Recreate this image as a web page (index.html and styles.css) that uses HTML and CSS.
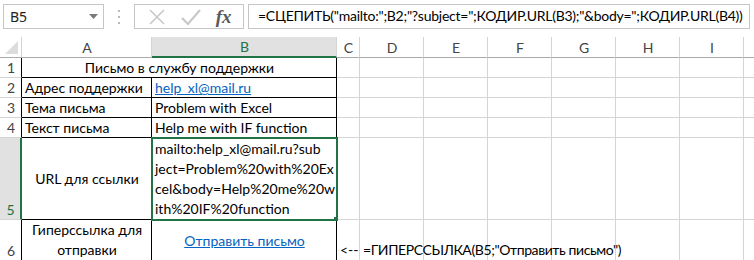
FILE: index.html
```html
<!DOCTYPE html>
<html lang="ru">
<head>
    <meta charset="UTF-8">
    <title>Письмо в службу поддержки</title>
    <link rel="stylesheet" href="styles.css">
</head>
<body>

    <div class="toolbar">
        <div class="namebox">
            <span class="namebox-text">B5</span>
            <svg class="dropdown" width="9" height="5" viewBox="0 0 9 5"><path d="M0 0h9L4.5 5z" fill="#7a7a7a"/></svg>
        </div>
        <svg class="grip" width="3" height="14" viewBox="0 0 3 14">
            <rect x="0" y="0" width="2" height="2" fill="#b9b9b9"/>
            <rect x="0" y="6" width="2" height="2" fill="#b9b9b9"/>
            <rect x="0" y="12" width="2" height="2" fill="#b9b9b9"/>
        </svg>
        <div class="fxbox">
            <svg width="18" height="18" viewBox="0 0 18 18"><path d="M2 2L16 16M16 2L2 16" stroke="#c8c8c8" stroke-width="1.6" fill="none"/></svg>
            <svg width="20" height="18" viewBox="0 0 20 18"><path d="M1 10L7 16L19 2" stroke="#c8c8c8" stroke-width="2.2" fill="none"/></svg>
            <span class="fx">fx</span>
        </div>
        <div class="formula">=СЦЕПИТЬ("mailto:";B2;"?subject=";КОДИР.URL(B3);"&amp;body=";КОДИР.URL(B4))</div>
    </div>

    <table class="sheet">
        <tr class="colhead">
            <th class="corner"><span class="corner-tri"></span></th>
            <th class="w-a">A</th>
            <th class="w-b selected">B</th>
            <th class="w-c">C</th>
            <th class="w-d">D</th>
            <th class="w-d">E</th>
            <th class="w-d">F</th>
            <th class="w-d">G</th>
            <th class="w-d">H</th>
            <th class="w-d">I</th>
            <th class="w-d"></th>
        </tr>
        <tr class="r20">
            <th class="rowhead boxed">1</th>
            <td colspan="2" class="box center">Письмо в службу поддержки</td>
            <td></td><td></td><td></td><td></td><td></td><td></td><td></td><td></td>
        </tr>
        <tr class="r20">
            <th class="rowhead boxed">2</th>
            <td class="box">Адрес поддержки</td>
            <td class="box"><span class="link">help_xl@mail.ru</span></td>
            <td></td><td></td><td></td><td></td><td></td><td></td><td></td><td></td>
        </tr>
        <tr class="r20">
            <th class="rowhead boxed">3</th>
            <td class="box">Тема письма</td>
            <td class="box">Problem with Excel</td>
            <td></td><td></td><td></td><td></td><td></td><td></td><td></td><td></td>
        </tr>
        <tr class="r20">
            <th class="rowhead boxed">4</th>
            <td class="box">Текст письма</td>
            <td class="box">Help me with IF function</td>
            <td></td><td></td><td></td><td></td><td></td><td></td><td></td><td></td>
        </tr>
        <tr class="r5">
            <th class="rowhead selected-row">5</th>
            <td class="box center middle">URL для ссылки</td>
            <td class="box wrap active">mailto:help_xl@mail.ru?sub<br>ject=Problem%20with%20Ex<br>cel&amp;body=Help%20me%20w<br>ith%20IF%20function</td>
            <td></td><td></td><td></td><td></td><td></td><td></td><td></td><td></td>
        </tr>
        <tr class="r6">
            <th class="rowhead boxed">6</th>
            <td class="box center two">Гиперссылка для<br>отправки</td>
            <td class="box center middle"><span class="link">Отправить письмо</span></td>
            <td class="overflow">&lt;--</td>
            <td class="overflow"><span class="spill">=ГИПЕРССЫЛКА(B5;"Отправить письмо")</span></td>
            <td></td><td></td><td></td><td></td><td></td><td></td>
        </tr>
        <tr class="r-last">
            <th class="rowhead"></th>
            <td></td><td></td><td></td><td></td><td></td><td></td><td></td><td></td><td></td><td></td>
        </tr>
    </table>

</body>
</html>
```

FILE: styles.css
```css
body {
    margin: 0;
    background: #fff;
    font-family: Lato, "Noto Sans", sans-serif;
    font-size: 14px;
    color: #000;
    overflow: hidden;
    width: 754px;
    height: 260px;
}
.toolbar {
    display: flex;
    align-items: center;
    height: 37px;
    padding-left: 3px;
    box-sizing: border-box;
}
.namebox {
    display: flex;
    align-items: center;
    justify-content: space-between;
    width: 101px;
    height: 25px;
    border: 1px solid #c6c6c6;
    box-sizing: border-box;
    padding: 0 5px 0 6px;
    margin-top: -4px;
}
.namebox-text {
    font-family: "Noto Sans", sans-serif;
    font-size: 14px;
    color: #222;
}
.grip {
    margin: -4px 13px 0 14px;
}
.fxbox {
    display: flex;
    align-items: center;
    justify-content: space-around;
    width: 110px;
    height: 25px;
    border: 1px solid #c6c6c6;
    box-sizing: border-box;
    margin-top: -4px;
    padding: 0 4px 0 6px;
}
.fx {
    font-family: "Liberation Serif", serif;
    font-style: italic;
    font-weight: bold;
    font-size: 19px;
    color: #5a5a5a;
}
.formula {
    flex: 1;
    min-width: 0;
    height: 25px;
    margin: -4px 4px 0 4px;
    border: 1px solid #c6c6c6;
    box-sizing: border-box;
    padding: 2px 0 0 9px;
    font-size: 14px;
    letter-spacing: -0.25px;
    white-space: nowrap;
    overflow: hidden;
}
.sheet {
    border-collapse: separate;
    border-spacing: 0;
    table-layout: fixed;
    width: 808px;
}
.sheet td, .sheet th {
    box-sizing: border-box;
    border-right: 1px solid #d4d4d4;
    border-bottom: 1px solid #d4d4d4;
    padding: 0 2px 0 3px;
    white-space: nowrap;
    overflow: hidden;
    vertical-align: bottom;
    line-height: 19px;
}
.colhead th {
    height: 20px;
    font-weight: normal;
    color: #444;
    text-align: center;
    border-bottom: 1px solid #ababab;
}
.colhead th.corner {
    width: 22px;
    position: relative;
}
.corner-tri {
    position: absolute;
    right: 3px;
    bottom: 3px;
    width: 0;
    height: 0;
    border-left: 13px solid transparent;
    border-bottom: 13px solid #dcdcdc;
}
.w-a { width: 130px; }
.w-b { width: 185px; }
.w-c { width: 23px; }
.w-d { width: 64px; }
.colhead th.selected {
    background: #e1e1e1;
    color: #217346;
    border-bottom: 2px solid #217346;
}
.rowhead {
    font-weight: normal;
    color: #444;
    text-align: center;
    padding: 0;
}
.sheet th.boxed {
    border-right-color: #000;
}
.sheet th.selected-row {
    background: #e1e1e1;
    color: #217346;
    border-right: 2px solid #217346;
}
.r20 td, .r20 th { height: 20px; }
.r5 td, .r5 th { height: 79px; }
.r6 td, .r6 th { height: 41px; }
.r-last td, .r-last th { height: 3px; border-bottom: none; }
.sheet td.box {
    border-right-color: #000;
    border-bottom-color: #000;
}
.center { text-align: center; }
.sheet td.middle { vertical-align: middle; }
.sheet td.wrap {
    line-height: 20px;
    vertical-align: top;
    padding-top: 1px;
}
.sheet td.two {
    line-height: 20px;
}
.active {
    position: relative;
    outline: 2px solid #217346;
    outline-offset: -1px;
}
.active::after {
    content: "";
    position: absolute;
    right: -4px;
    bottom: -4px;
    width: 5px;
    height: 5px;
    background: #217346;
    border: 1px solid #fff;
}
.link {
    color: #0563c1;
    text-decoration: underline;
}
.sheet td.overflow {
    overflow: visible;
    padding-bottom: 1px;
}
.spill {
    position: relative;
    z-index: 1;
    letter-spacing: -0.4px;
}
```
